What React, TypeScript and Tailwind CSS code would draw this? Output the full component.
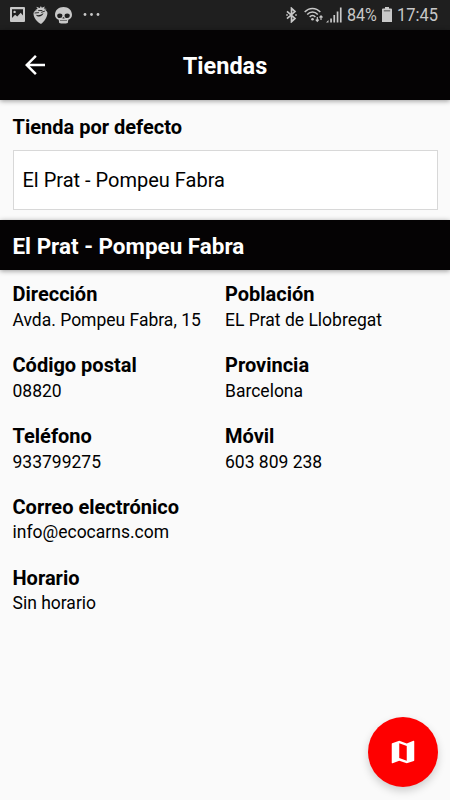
const fields = [
    { label: "Dirección", value: "Avda. Pompeu Fabra, 15" },
    { label: "Población", value: "EL Prat de Llobregat" },
    { label: "Código postal", value: "08820" },
    { label: "Provincia", value: "Barcelona" },
    { label: "Teléfono", value: "933799275" },
    { label: "Móvil", value: "603 809 238" },
    { label: "Correo electrónico", value: "info@ecocarns.com", wide: true },
    { label: "Horario", value: "Sin horario", wide: true },
];

function NotificationIcons() {
    return (
        <div className="flex items-center h-full">
            <svg className="w-[15px] h-[15px] -mt-px" viewBox="0 0 15 15">
                <rect width="15" height="15" rx="1" fill="currentColor" />
                <path d="M2 2.300h11v6.200l-2.300-2.700-3.400 3.700-2.200-1.800L2 11z" fill="#1f1f1f" />
                <circle cx="4.600" cy="4.900" r="1.200" fill="currentColor" />
            </svg>
            {/* strawberry */}
            <svg className="w-[15px] h-[18px] ml-2" viewBox="0 0 15 18" fill="currentColor">
                <path d="M7.500 3.800C10 3 13.200 3.400 14.200 6c1.100 3-2.200 9.400-6.200 12C4 16.500-.2 10.500.6 6.800c.6-2.600 4.100-3.400 6.900-3z" />
                <path d="M7 4.500L2 4.200l2.600-1.500L3.200.8l3.600 1.200L7.900 0l.9 1.700L12 .5l-1.200 1.900 3.100.6-4.200 1.600z" />
                <path d="M1.600 7l4.300-.4M8.200 6.400l3.700-1.300M5.200 4.600l4.200-.1" stroke="#1f1f1f" strokeWidth=".9" fill="none" />
                <path d="M2.800 8.700c2.200 1 4.800.5 7.700-1.700-.9 3.500-5.500 5-7.700 1.700z" fill="#1f1f1f" />
            </svg>
            {/* skull */}
            <svg className="w-[17px] h-[17px] ml-[7px]" viewBox="0 0 17 17" fill="currentColor">
                <path d="M8.500 0C13.500 0 17 3.200 17 7.800c0 2.400-1.200 4.200-3.700 4.900l-.5 3.200c-2.500.7-6.100.7-8.600 0l-.5-3.200C1.200 12 0 10.200 0 7.800 0 3.200 3.500 0 8.500 0z" />
                <ellipse cx="4.800" cy="8.700" rx="2.600" ry="2.300" fill="#1f1f1f" />
                <ellipse cx="12.200" cy="8.700" rx="2.600" ry="2.300" fill="#1f1f1f" />
                <path d="M7.900 10.200h1.200l.5 1.400H7.400zM5 13.400h7v.6H5z" fill="#1f1f1f" />
            </svg>
            <svg className="w-[17px] h-[3px] ml-[11px] -mt-px" viewBox="0 0 17 3" fill="currentColor">
                <circle cx="2" cy="1.500" r="1.400" />
                <circle cx="8.500" cy="1.500" r="1.400" />
                <circle cx="15" cy="1.500" r="1.400" />
            </svg>
        </div>
    );
}

function StatusBar() {
    return (
        <div className="flex items-center justify-between h-[30px] pl-[10px] pr-[11px] bg-[#1f1f1f] text-[#c8c8c8]">
            <NotificationIcons />
            <div className="flex items-center h-full">
                <svg className="w-[11px] h-[16px] -mt-px" viewBox="0 0 11 16" fill="none" stroke="currentColor" strokeWidth="1.700">
                    <path d="M1 4.300l8 7.100-3.500 3.300V1.300L9 4.600l-8 7.100" />
                    <path d="M.2 8h1.600M9.200 8h1.600" />
                </svg>
                <svg className="w-[20px] h-[16px] ml-[7px] -mt-px" viewBox="0 0 20 16" fill="none" stroke="currentColor" strokeWidth="1.500">
                    <path d="M.7 5C5 .2 12 .2 16.300 5M3.200 7.500c3-3.300 7.600-3.300 10.600 0M5.700 10c1.700-1.900 4-1.900 5.700 0" />
                    <circle cx="8.500" cy="12.300" r="1.300" fill="currentColor" stroke="none" />
                    <path d="M13.300 10v4M11.800 12.700l1.500 1.700 1.500-1.700M17 13V9M15.500 10.500L17 8.800l1.500 1.700" strokeWidth="1.200" />
                </svg>
                <svg className="w-[16px] h-[16px] ml-[2px] -mt-px" viewBox="0 0 16 16" fill="currentColor">
                    <path d="M0 15.500L2.500 13v2.500zM4.200 11.500h1.700v4H4.200zM7.400 8h1.700v7.500H7.400zM10.700 4.500h1.700v11h-1.700zM13.900.5h1.700v15h-1.700z" />
                </svg>
                <span className="ml-[5px] w-[31px] text-[18.500px] leading-[30px] whitespace-nowrap origin-left scale-x-[0.870]">84%</span>
                <svg className="w-[10px] h-[15px] ml-[4px] -mt-px" viewBox="0 0 10 15">
                    <path d="M3 0h4v1.500h2a1 1 0 0 1 1 1V15H0V2.500a1 1 0 0 1 1-1h2z" fill="currentColor" />
                    <path d="M1.800 3h6.400v1.500H1.800z" fill="#777" />
                </svg>
                <span className="ml-[5px] w-[42px] text-[18.500px] leading-[30px] whitespace-nowrap origin-left scale-x-[0.890]">17:45</span>
            </div>
        </div>
    );
}

export default function App() {
    return (
        <div className="relative h-[800px] w-full overflow-hidden bg-[#fafafa] font-['Roboto',sans-serif] text-black">
            <StatusBar />
            <header className="grid grid-cols-[70px_1fr_70px] items-center h-[70px] bg-[#050304] text-white shadow-[0_1px_5px_rgba(0,0,0,0.400)]">
                <button className="flex justify-center" aria-label="Volver">
                    <svg className="w-[30px] h-[30px]" viewBox="0 0 24 24" fill="currentColor">
                        <path d="M20 11H7.830l5.590-5.590L12 4l-8 8 8 8 1.410-1.410L7.830 13H20v-2z" />
                    </svg>
                </button>
                <h1 className="pt-px text-center text-[23.500px] font-bold leading-8">Tiendas</h1>
            </header>

            <section className="h-[120px] px-[12.500px] pt-[13px]">
                <h2 className="text-[20px] font-bold leading-7">Tienda por defecto</h2>
                <div className="flex items-center h-[60px] mt-[9px] pl-[9px] bg-white border border-[#d8d8d8] text-[20px]">El Prat - Pompeu Fabra</div>
            </section>

            <div className="flex items-center h-[50px] px-[12.500px] pt-[3px] bg-[#050304] text-white text-[22.450px] font-bold shadow-[0_1px_5px_rgba(0,0,0,0.400)]">El Prat - Pompeu Fabra</div>

            <dl className="grid grid-cols-2 gap-y-[20.200px] px-[12.500px] pt-[11.400px]">
                {fields.map((field) => (
                    <div key={field.label} className={field.wide ? "col-span-2" : ""}>
                        <dt className="text-[20px] font-bold leading-[26px]">{field.label}</dt>
                        <dd className="pt-[0.600px] text-[17.500px] leading-[24px]">{field.value}</dd>
                    </div>
                ))}
            </dl>

            <button className="absolute right-[12.500px] bottom-[13px] flex items-center justify-center w-[70px] h-[70px] rounded-full bg-[#fe0000] text-white shadow-[0_4px_9px_rgba(0,0,0,0.180)]" aria-label="Mapa">
                <svg className="w-[30px] h-[30px]" viewBox="0 0 24 24" fill="currentColor">
                    <path d="M20.500 3l-.16.03L15 5.100 9 3 3.360 4.900c-.21.07-.36.25-.36.480V20.500c0 .28.220.500.500.500l.16-.03L9 18.900l6 2.100 5.640-1.900c.21-.07.36-.25.36-.480V3.500c0-.28-.220-.500-.500-.500zM15 19l-6-2.110V5l6 2.110V19z" />
                </svg>
            </button>
        </div>
    );
}
